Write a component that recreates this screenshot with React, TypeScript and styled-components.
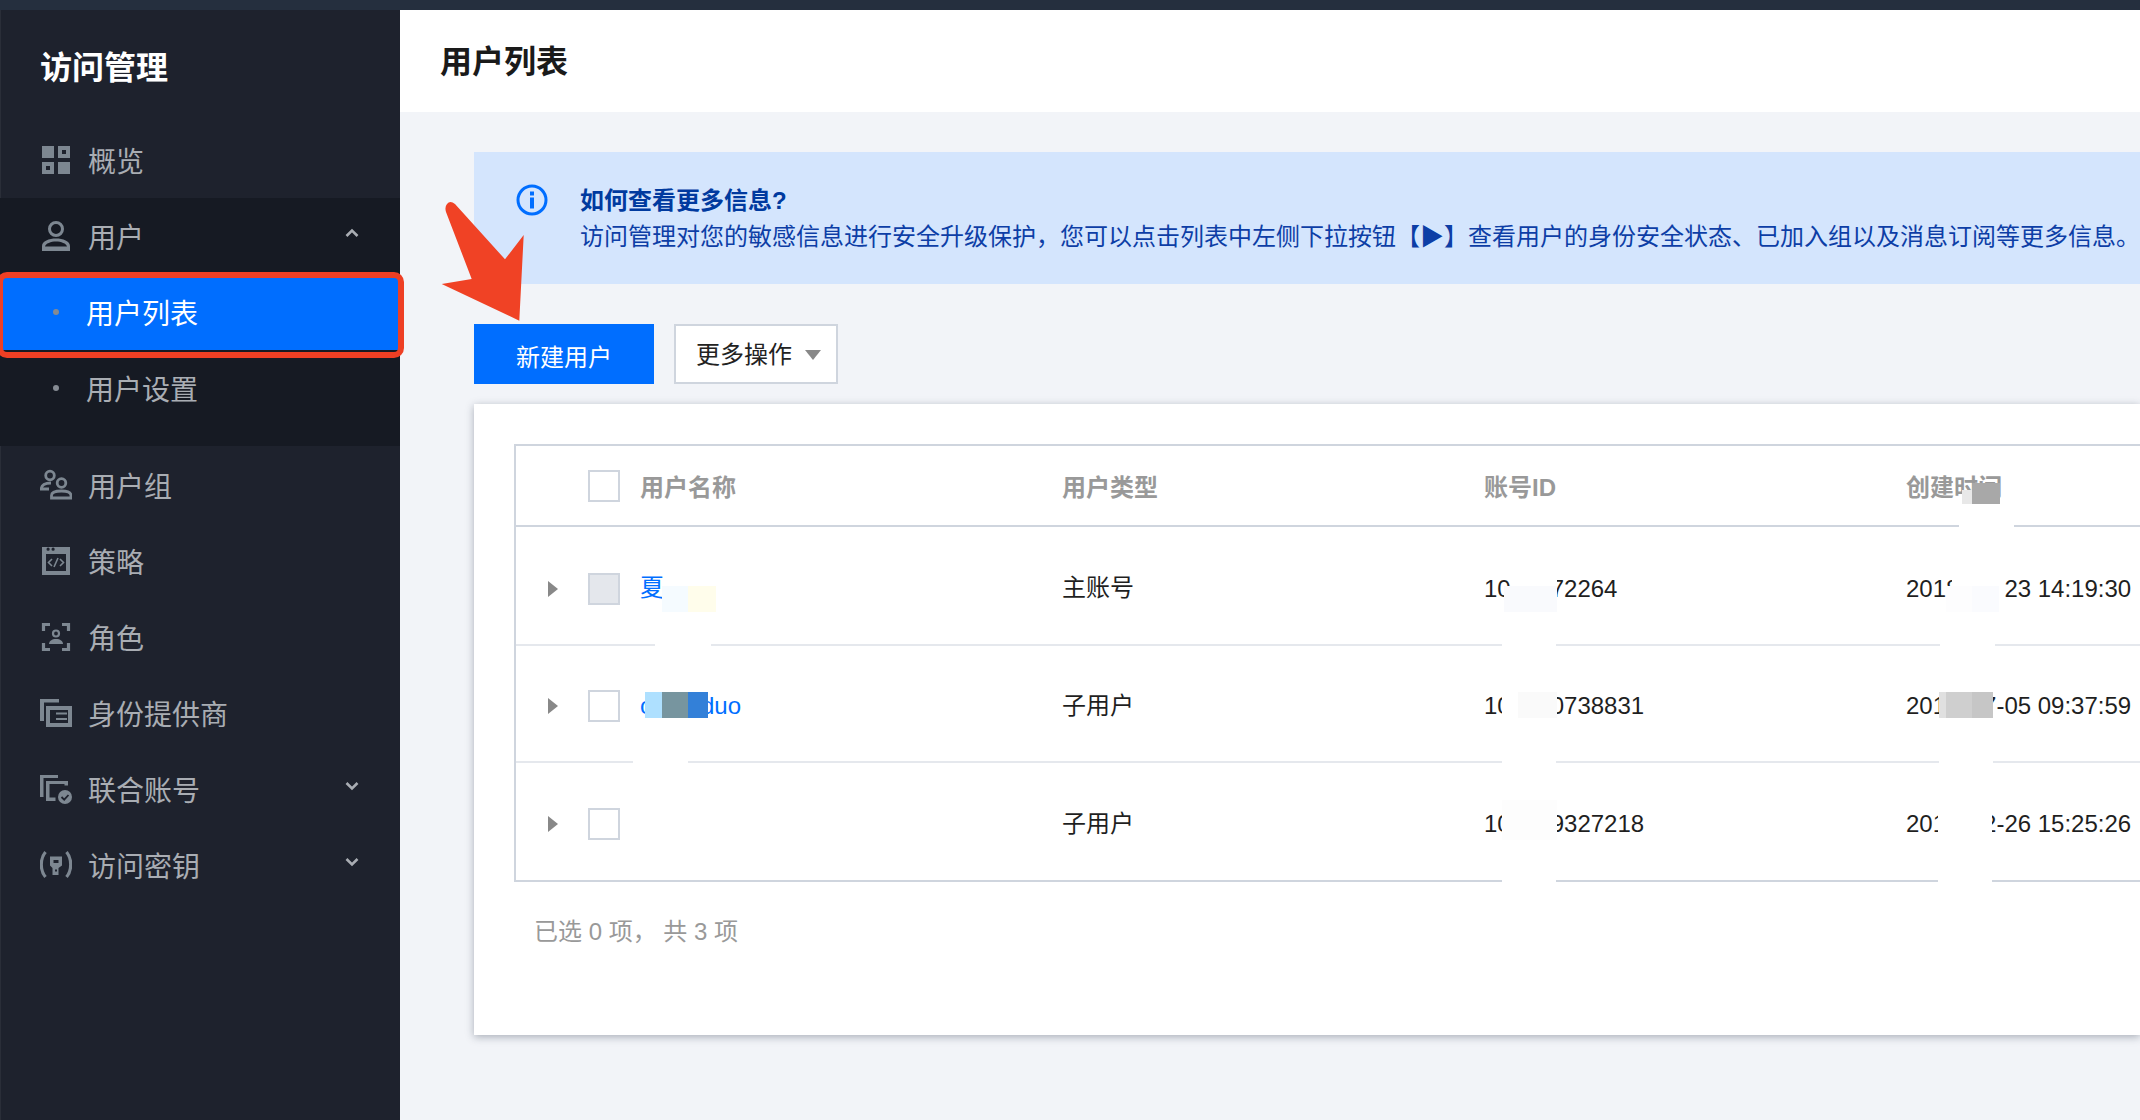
import React from "react";
import styled, { createGlobalStyle } from "styled-components";

const GlobalStyle = createGlobalStyle`
  html, body { margin: 0; padding: 0; width: 2140px; height: 1120px; overflow: hidden; }
  body { font-family: "Liberation Sans", "Noto Sans CJK SC", sans-serif; font-size: 24px; background: #f2f4f8; }
  * { box-sizing: border-box; }
`;

const Page = styled.div`
  position: relative;
  display: flex;
  flex-direction: column;
  width: 2140px;
  height: 1120px;
  overflow: hidden;
`;
const TopBar = styled.div`
  height: 10px;
  flex: none;
  background: #252f3e;
`;
const Body = styled.div`
  flex: 1;
  display: flex;
  min-height: 0;
`;
const Sidebar = styled.nav`
  width: 400px;
  flex: none;
  background: #1e222d;
  position: relative;
  z-index: 2;
  border-left: 1px solid #2a2e38;
`;
const SideTitle = styled.h1`
  margin: 0;
  height: 112px;
  padding: 0 0 0 39px;
  display: flex;
  align-items: center;
  padding-bottom: 2px;
  font-size: 32px;
  font-weight: 700;
  color: #fff;
`;
const Item = styled.div`
  height: 76px;
  display: flex;
  align-items: center;
  padding-left: 39px;
  color: #a9adb3;
  font-size: 28px;
  gap: 16px;
`;
const ItemIcon = styled.svg`
  width: 32px;
  height: 32px;
  flex: none;
  fill: #7d8791;
  color: #7d8791;
`;
const ItemLabel = styled.span`
  flex: 1;
`;
const Chevron = styled.svg`
  width: 14px;
  height: 10px;
  margin-right: 41px;
  margin-top: -6px;
  fill: none;
  stroke: #a9adb3;
  stroke-width: 2.6;
`;
const Group = styled.div`
  background: #161a23;
  padding-bottom: 20px;
  margin-left: -1px;
  padding-left: 1px;
  margin-bottom: 1px;
`;
const SubItem = styled.div<{ $active?: boolean }>`
  position: relative;
  height: 76px;
  display: flex;
  align-items: center;
  padding-left: 85px;
  font-size: 28px;
  color: ${(p) => (p.$active ? "#fff" : "#a9adb3")};
  background: ${(p) => (p.$active ? "#006eff" : "transparent")};
`;
const Bullet = styled.i`
  position: absolute;
  left: 52px;
  top: 35px;
  width: 6px;
  height: 6px;
  border-radius: 50%;
  background: #858b93;
`;
const RedOutline = styled.div`
  position: absolute;
  left: -4px;
  right: -4px;
  top: -2px;
  bottom: -8px;
  border: 6px solid #ee3f24;
  border-radius: 10px;
`;
const Main = styled.main`
  flex: 1;
  min-width: 0;
  display: flex;
  flex-direction: column;
`;
const Header = styled.header`
  height: 102px;
  flex: none;
  background: #fff;
  display: flex;
  align-items: center;
  padding: 0 0 4px 40px;
  font-size: 32px;
  font-weight: 700;
  color: #1a1a1a;
`;
const Content = styled.div`
  flex: 1;
  padding: 40px 0 0 74px;
`;
const Alert = styled.div`
  height: 132px;
  background: #d4e5fd;
  display: flex;
  padding: 31px 0 29px 42px;
  gap: 32px;
  color: #0d3ea6;
  line-height: 36px;
  white-space: nowrap;
`;
const AlertIcon = styled.svg`
  width: 32px;
  height: 32px;
  flex: none;
  margin-top: 1px;
`;
const AlertTitle = styled.div`
  font-weight: 700;
  color: #003a9f;
`;
const Toolbar = styled.div`
  display: flex;
  gap: 20px;
  margin-top: 40px;
`;
const PrimaryButton = styled.div`
  width: 180px;
  height: 60px;
  padding-top: 2px;
  background: #006eff;
  color: #fff;
  display: flex;
  align-items: center;
  justify-content: center;
`;
const MenuButton = styled.div`
  width: 164px;
  height: 60px;
  background: #fff;
  border: 2px solid #cfd5de;
  color: #222;
  display: flex;
  align-items: center;
  padding: 0 0 4px 20px;
  gap: 13px;
`;
const Caret = styled.i`
  width: 0;
  height: 0;
  margin-top: 6px;
  border-left: 8px solid transparent;
  border-right: 8px solid transparent;
  border-top: 10px solid #888;
`;
const Panel = styled.section`
  height: 631px;
  margin-top: 20px;
  background: #fff;
  padding: 40px 0 0 40px;
  box-shadow: 0 2px 8px rgba(40, 50, 70, 0.36);
`;
const Table = styled.div`
  border: 2px solid #cfd5de;
  border-right: none;
`;
/* $shift moves the row's Latin text, checkbox and expander down; CJK cells undo it
   because the fallback CJK font sits lower on the shared baseline. */
const Row = styled.div<{ $head?: boolean; $last?: boolean; $h: number; $shift?: number }>`
  display: grid;
  grid-template-columns: 124px 422px 422px 422px 1fr;
  align-items: center;
  height: ${(p) => p.$h}px;
  padding-top: ${(p) => (p.$shift || 0) * 2}px;
  color: ${(p) => (p.$head ? "#999" : "#1f1f1f")};
  font-weight: ${(p) => (p.$head ? 700 : 400)};
  border-bottom: ${(p) => (p.$last ? "none" : p.$head ? "2px solid #cfd5de" : "2px solid #e5e8ed")};
  white-space: nowrap;
`;
const CjkCell = styled.span<{ $shift: number; $link?: boolean }>`
  padding-bottom: ${(p) => p.$shift * 2}px;
  color: ${(p) => (p.$link ? "#006eff" : "inherit")};
`;
const Lead = styled.div`
  display: flex;
  align-items: center;
  padding-left: 32px;
`;
const Expand = styled.i<{ $hidden?: boolean }>`
  width: 0;
  height: 0;
  border-top: 8px solid transparent;
  border-bottom: 8px solid transparent;
  border-left: 10px solid ${(p) => (p.$hidden ? "transparent" : "#888")};
  margin-right: 30px;
`;
const Check = styled.i<{ $disabled?: boolean }>`
  width: 32px;
  height: 32px;
  border: 2px solid #cfd5de;
  background: ${(p) => (p.$disabled ? "#e4e7ec" : "#fff")};
`;
const NameLink = styled.span`
  color: #006eff;
`;
const Hidden = styled.span<{ $w: number }>`
  display: inline-block;
  width: ${(p) => p.$w}px;
`;
const Footer = styled.div`
  margin: 34px 0 0 20px;
  color: #999;
  line-height: 32px;
`;
const Arrow = styled.svg`
  position: absolute;
  left: 0;
  top: 0;
  width: 2140px;
  height: 1120px;
  pointer-events: none;
  z-index: 3;
`;
const Redaction = styled.div.attrs<{ $x: number; $y: number; $w: number; $h: number }>((p) => ({
  style: { left: p.$x, top: p.$y, width: p.$w, height: p.$h },
}))<{ $x: number; $y: number; $w: number; $h: number; $c?: string }>`
  position: absolute;
  background: ${(p) => p.$c || "#fff"};
`;

const redactions: [number, number, number, number, string?][] = [
  [1972, 483, 28, 21, "#a8a8a8"],
  [1962, 490, 10, 14, "#e8e8e8"],
  [1959, 520, 55, 12],
  [668, 565, 12, 21],
  [662, 586, 26, 26, "#f5fbff"],
  [688, 586, 28, 26, "#fffdeb"],
  [645, 692, 17, 26, "#aee0ff"],
  [662, 692, 26, 26, "#77959f"],
  [688, 692, 20, 26, "#3380d8"],
  [655, 640, 56, 10],
  [633, 758, 55, 10],
  [1518, 560, 39, 26],
  [1504, 586, 53, 26, "#f9fafd"],
  [1952, 560, 53, 26],
  [1946, 586, 26, 26, "#fdfdfe"],
  [1972, 586, 27, 26, "#fafbfe"],
  [1502, 640, 54, 10],
  [1940, 640, 55, 10],
  [1502, 692, 16, 26],
  [1518, 692, 39, 26, "#fafafa"],
  [1939, 692, 7, 26, "#e0e0e0"],
  [1946, 692, 26, 26, "#cfcfcf"],
  [1972, 692, 21, 26, "#c6c6c6"],
  [1502, 758, 54, 10],
  [1939, 758, 54, 10],
  [1502, 800, 55, 40, "#fdfdfd"],
  [1938, 800, 54, 40],
  [1502, 876, 54, 10],
  [1938, 876, 54, 10],
];

const Up = () => (
  <Chevron viewBox="0 0 14 10"><path d="M1.5 8 L7 2.5 L12.5 8" /></Chevron>
);
const Down = () => (
  <Chevron viewBox="0 0 14 10"><path d="M1.5 2 L7 7.5 L12.5 2" /></Chevron>
);

const Sub = ({ active, children }: { active?: boolean; children: React.ReactNode }) => (
  <SubItem $active={active}>
    <Bullet />
    {children}
    {active && <RedOutline />}
  </SubItem>
);

export default function App() {
  return (
    <Page>
      <GlobalStyle />
      <TopBar />
      <Body>
        <Sidebar>
          <SideTitle>访问管理</SideTitle>
          <Item>
            <ItemIcon viewBox="0 0 32 32">
              <path fillRule="evenodd" d="M2 2h12v12H2zM18 2h12v12H18zM22 6v4h4V6zM2 18h12v12H2zM6 22v4h4v-4zM18 18h12v12H18z" />
            </ItemIcon>
            <ItemLabel>概览</ItemLabel>
          </Item>
          <Group>
            <Item>
              <ItemIcon viewBox="0 0 32 32">
                <path fillRule="evenodd" d="M16 1a8 8 0 1 1 0 16a8 8 0 0 1 0-16zM16 4a5 5 0 1 0 0 10a5 5 0 0 0 0-10zM2 31v-5c0-5 7-7.500 14-7.500s14 2.500 14 7.500v5zM5 26.500h22c-.5-3-6-5-11-5s-10.500 2-11 5z" />
              </ItemIcon>
              <ItemLabel>用户</ItemLabel>
              <Up />
            </Item>
            <Sub active>用户列表</Sub>
            <Sub>用户设置</Sub>
          </Group>
          <Item>
            <ItemIcon viewBox="0 0 32 32">
              <g fill="none" stroke="currentColor" strokeWidth="2.8">
                <circle cx="10" cy="6.500" r="4.300" />
                <circle cx="21.500" cy="14" r="4.300" />
                <path d="M11 14C5 14 1.300 16 1.300 20H9" />
                <path d="M11.500 29V26.500C11.500 23.500 16 22 21.500 22S31 23.500 31 26.500V29Z" />
              </g>
            </ItemIcon>
            <ItemLabel>用户组</ItemLabel>
          </Item>
          <Item>
            <ItemIcon viewBox="0 0 32 32">
              <path fillRule="evenodd" d="M2 2h28v28H2zM6 9v17h20V9zM6.500 4.200a1.600 1.600 0 1 0 3.200 0a1.600 1.600 0 0 0-3.200 0zM11.500 4.200a1.600 1.600 0 1 0 3.200 0a1.600 1.600 0 0 0-3.200 0z" />
              <path d="M12 14 L8.500 17.500 L12 21 M20 14 L23.500 17.500 L20 21 M18 13 L14 22" fill="none" stroke="currentColor" strokeWidth="1.600" />
            </ItemIcon>
            <ItemLabel>策略</ItemLabel>
          </Item>
          <Item>
            <ItemIcon viewBox="0 0 32 32">
              <path d="M3.500 10V3.500H10M22 3.500H28.500V10M3.500 22V28.500H10M22 28.500H28.500V22" fill="none" stroke="currentColor" strokeWidth="3.200" />
              <circle cx="16" cy="12.500" r="3" fill="none" stroke="currentColor" strokeWidth="2.200" />
              <path d="M9 23c0-3 3-5 7-5s7 2 7 5z" />
            </ItemIcon>
            <ItemLabel>角色</ItemLabel>
          </Item>
          <Item>
            <ItemIcon viewBox="0 0 32 32">
              <path fillRule="evenodd" d="M0 2h19v3.500H4V24H0zM6 9h26v21H6zM10 13v13h18V13zM16 15.500h11v2H16zM16 21h11v2H16z" />
            </ItemIcon>
            <ItemLabel>身份提供商</ItemLabel>
          </Item>
          <Item>
            <ItemIcon viewBox="0 0 32 32">
              <path d="M0 2h18v3H3.500V24H0zM6 8h22v4.500h-3.500V11H9.500v13.500h6V28H6z" />
              <circle cx="25" cy="24" r="7" />
              <path d="M21.500 24 L24.200 26.700 L28.500 22" fill="none" stroke="#1e222d" strokeWidth="1.800" />
            </ItemIcon>
            <ItemLabel>联合账号</ItemLabel>
            <Down />
          </Item>
          <Item>
            <ItemIcon viewBox="0 0 32 32">
              <path d="M5.500 3C2.500 6.500 1.300 10.500 1.300 15.500S2.500 24.500 5.500 28M26.500 3C29.500 6.500 30.700 10.500 30.700 15.500S29.500 24.500 26.500 28" fill="none" stroke="currentColor" strokeWidth="3.200" />
              <path fillRule="evenodd" d="M10 7.500h12v9l-3.500 2.500v7h-6v-7l-2.500-2.500zM13.500 11v3h5v-3zM15 20.500v2h2v-2z" />
            </ItemIcon>
            <ItemLabel>访问密钥</ItemLabel>
            <Down />
          </Item>
        </Sidebar>
        <Main>
          <Header>用户列表</Header>
          <Content>
            <Alert>
              <AlertIcon viewBox="0 0 32 32">
                <circle cx="16" cy="16" r="14" fill="none" stroke="#006eff" strokeWidth="3" />
                <rect x="14" y="7.500" width="4" height="4" fill="#006eff" />
                <rect x="14" y="13.500" width="4" height="11" fill="#006eff" />
              </AlertIcon>
              <div>
                <AlertTitle>如何查看更多信息?</AlertTitle>
                <div>访问管理对您的敏感信息进行安全升级保护，您可以点击列表中左侧下拉按钮【▶】查看用户的身份安全状态、已加入组以及消息订阅等更多信息。</div>
              </div>
            </Alert>
            <Toolbar>
              <PrimaryButton>新建用户</PrimaryButton>
              <MenuButton>更多操作<Caret /></MenuButton>
            </Toolbar>
            <Panel>
              <Table>
                <Row $head $h={81}>
                  <Lead><Expand $hidden /><Check /></Lead>
                  <span>用户名称</span>
                  <span>用户类型</span>
                  <span>账号ID</span>
                  <span>创建时间</span>
                </Row>
                <Row $h={119} $shift={3}>
                  <Lead><Expand /><Check $disabled /></Lead>
                  <CjkCell $shift={3} $link>夏</CjkCell>
                  <CjkCell $shift={3}>主账号</CjkCell>
                  <span>10<Hidden $w={40} />72264</span>
                  <span>2018<Hidden $w={45} />23 14:19:30</span>
                </Row>
                <Row $h={117} $shift={2}>
                  <Lead><Expand /><Check /></Lead>
                  <NameLink>c<Hidden $w={49} />duo</NameLink>
                  <CjkCell $shift={2}>子用户</CjkCell>
                  <span>10<Hidden $w={40} />0738831</span>
                  <span>201<Hidden $w={37} />7-05 09:37:59</span>
                </Row>
                <Row $last $h={117} $shift={2}>
                  <Lead><Expand /><Check /></Lead>
                  <span />
                  <CjkCell $shift={2}>子用户</CjkCell>
                  <span>10<Hidden $w={40} />9327218</span>
                  <span>201<Hidden $w={37} />2-26 15:25:26</span>
                </Row>
              </Table>
              <Footer>已选 0 项， 共 3 项</Footer>
            </Panel>
          </Content>
        </Main>
      </Body>
      {redactions.map(([x, y, w, h, c], i) => (
        <Redaction key={i} $x={x} $y={y} $w={w} $h={h} $c={c} />
      ))}
      <Arrow viewBox="0 0 2140 1120">
        <path d="M519.300 320.700 L523.700 235 L505 259.300 L455 204 Q450 200 447 204 Q444.500 207 446 212 L471.700 279 L441.700 284 Z" fill="#f04225" />
      </Arrow>
    </Page>
  );
}
